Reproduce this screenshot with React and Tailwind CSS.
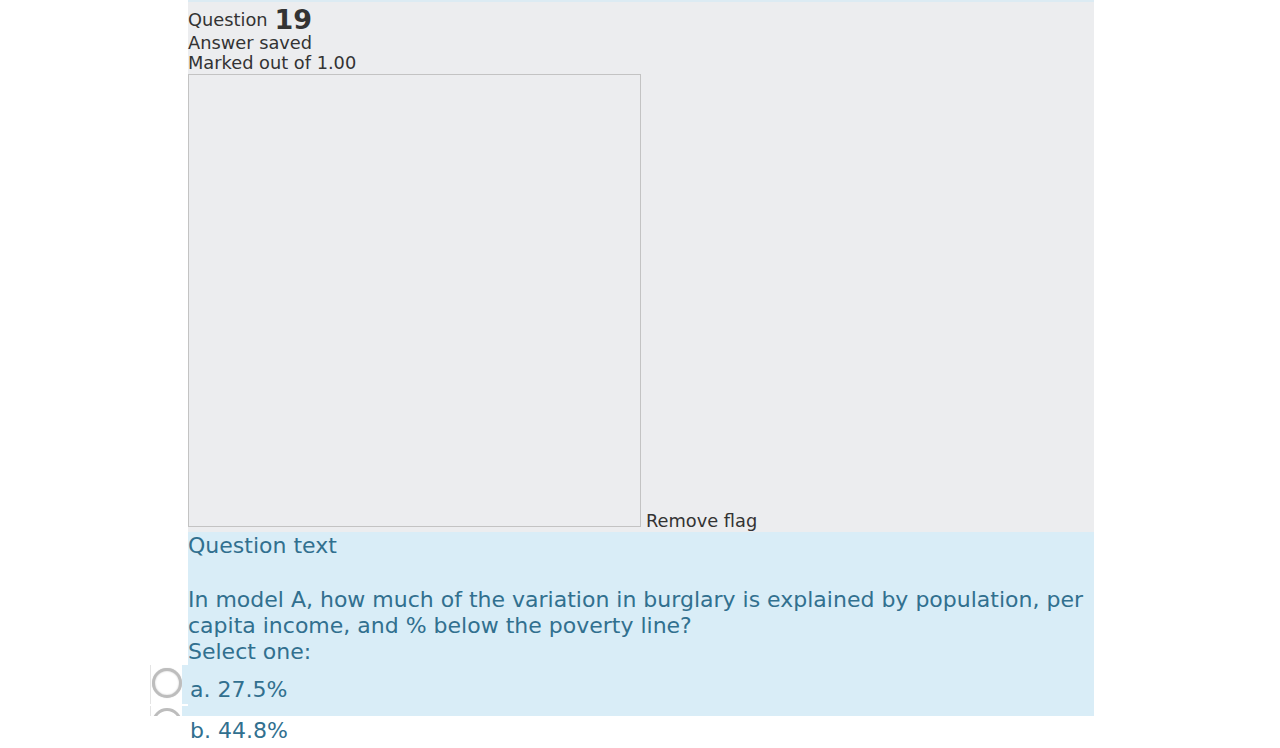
export default function App() {
  return (
    <div className="w-full h-[748px] overflow-hidden bg-white">
      <div className="ml-[188px] w-[906px] font-['DejaVu_Sans',sans-serif]">
        <div className="bg-[#ecedef] border-t-2 border-[#dcebf3] text-[#333333] pb-[5px]">
          <div className="h-[31px] flex items-end leading-[26px]">
            <span className="text-[17.8px]">Question</span>
            <span className="text-[27px] font-bold ml-[7px]">19</span>
          </div>
          <div className="text-[17.8px] leading-[20px]">Answer saved</div>
          <div className="text-[17.8px] leading-[20px]">Marked out of 1.00</div>
          <div className="flex items-end mt-[1px]">
            <div className="w-[453px] h-[453px] border border-[#c3c3c3] bg-[#ecedef]" />
            <span className="ml-[5px] text-[17.8px] leading-[20px] mb-[-4px]">Remove flag</span>
          </div>
        </div>
        <div className="bg-[#d9edf7] text-[#31708f] text-[22px] leading-[26px] h-[184px]">
          <div className="pt-[1px]">Question text</div>
          <div className="mt-[28px]">
            In model A, how much of the variation in burglary is explained by population, per capita income, and % below the poverty line?
          </div>
          <div>Select one:</div>
          <div className="flex ml-[-38px] h-[39px]">
            <div className="w-[32px] h-[39px] bg-white border-l border-[#e4e4e4] flex items-start justify-center pt-[3px]">
              <div className="w-[30px] h-[30px] rounded-full border-[3px] border-[#bdbdbd] bg-white shadow-[inset_0_0_2px_rgba(0,0,0,0.2),0_0_1px_rgba(0,0,0,0.2)]" />
            </div>
            <div className="flex-1 pl-[8px] pt-[12px] bg-[#d9edf7]">a. 27.5%</div>
          </div>
          <div className="flex ml-[-38px] h-[10px] mt-[2px] overflow-hidden">
            <div className="w-[32px] h-[10px] bg-white border-l border-[#e4e4e4] flex items-start justify-center pt-[2px]">
              <div className="w-[30px] h-[30px] shrink-0 rounded-full border-[3px] border-[#bdbdbd] bg-white" />
            </div>
            <div className="flex-1 bg-[#d9edf7]" />
          </div>
        </div>
        <div className="text-[#31708f] text-[22px] leading-[26px] pl-[2px] pt-[2px]">b. 44.8%</div>
      </div>
    </div>
  );
}
